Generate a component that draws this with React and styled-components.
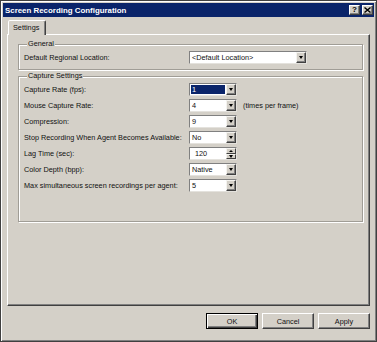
import React from "react";
import styled, { createGlobalStyle } from "styled-components";

const Global = createGlobalStyle`
  html, body { margin: 0; padding: 0; background: #d4d0c8; }
  body { font-family: "Liberation Sans", Arial, sans-serif; font-size: 7.3px; color: #111; }
  * { box-sizing: border-box; }
`;

const Window = styled.div`
  width: 377px;
  height: 342px;
  background: #d4d0c8;
  border: 1px solid #404040;
  box-shadow: inset 1px 1px 0 #ffffff, inset -1px -1px 0 #808080;
  padding: 2px;
  display: flex;
  flex-direction: column;
`;

const TitleBar = styled.div`
  height: 14px;
  background: #0a246a;
  display: flex;
  align-items: center;
  padding: 0 1px 0 2px;
`;

const TitleText = styled.div`
  flex: 1;
  color: #fff;
  font-weight: bold;
  font-size: 7.9px;
  white-space: nowrap;
`;

const TitleButtons = styled.div`
  display: flex;
  gap: 2px;
`;

const CaptionButton = styled.div`
  width: 11px;
  height: 10px;
  background: #d4d0c8;
  border: 1px solid;
  border-color: #ffffff #404040 #404040 #ffffff;
  box-shadow: inset -1px -1px 0 #808080;
  display: flex;
  align-items: center;
  justify-content: center;
  font-weight: bold;
  font-size: 8px;
  line-height: 1;
  color: #000;
`;

const Body = styled.div`
  flex: 1;
  display: flex;
  flex-direction: column;
  padding: 3px 4px 0 4px;
`;

const TabStrip = styled.div`
  display: flex;
  height: 14px;
  position: relative;
  z-index: 1;
`;

const Tab = styled.div`
  margin-left: 1px;
  width: 38px;
  height: 15px;
  background: #d4d0c8;
  border: 1px solid;
  border-bottom: none;
  border-color: #ffffff #404040 transparent #ffffff;
  box-shadow: inset -1px 0 0 #808080;
  border-radius: 2px 2px 0 0;
  padding-left: 4px;
  display: flex;
  align-items: center;
  padding-bottom: 1px;
`;

const Panel = styled.div`
  height: 272px;
  border: 1px solid;
  border-color: #ffffff #404040 #404040 #ffffff;
  box-shadow: inset -1px -1px 0 #808080;
  padding: 4px 6px 0 10px;
  display: flex;
  flex-direction: column;
`;

const Group = styled.fieldset`
  margin: ${(p) => p.$mt || 0}px 0 0 0;
  padding: 2px 5px ${(p) => p.$pb || 5}px 5px;
  border: 1px solid #a09d96;
  box-shadow: 1px 1px 0 #ffffff, inset 1px 1px 0 #ffffff;
  min-width: 0;
`;

const Legend = styled.legend`
  padding: 0 1px;
  margin-left: 3px;
  line-height: 10px;
  height: 10px;
  background: #d4d0c8;
  position: relative;
`;

const FormGrid = styled.div`
  display: grid;
  grid-template-columns: 165px auto;
  row-gap: 3px;
  align-items: center;
`;

const Label = styled.div`
  height: 13px;
  display: flex;
  align-items: center;
  white-space: nowrap;
`;

const ControlCell = styled.div`
  display: flex;
  align-items: center;
  gap: 6px;
`;

const Note = styled.span`
  white-space: nowrap;
`;

const Combo = styled.div`
  width: ${(p) => p.$w}px;
  height: 13px;
  background: #fff;
  border: 1px solid;
  border-color: #808080 #e4e2dd #e4e2dd #808080;
  display: flex;
  align-items: stretch;
`;

const ComboText = styled.div`
  flex: 1;
  display: flex;
  align-items: center;
  padding-left: ${(p) => p.$pl || 1}px;
  margin: 1px;
  background: ${(p) => (p.$selected ? "#0a246a" : "transparent")};
  color: ${(p) => (p.$selected ? "#fff" : "#111")};
  white-space: nowrap;
  overflow: hidden;
`;

const DropButton = styled.div`
  width: 10px;
  background: #d4d0c8;
  border: 1px solid;
  border-color: #f4f3ef #404040 #404040 #f4f3ef;
  box-shadow: inset -1px -1px 0 #808080;
  display: flex;
  align-items: center;
  justify-content: center;
`;

const Arrow = styled.span`
  width: 0;
  height: 0;
  border-left: 2.5px solid transparent;
  border-right: 2.5px solid transparent;
  ${(p) =>
    p.$up
      ? "border-bottom: 2px solid #000;"
      : "border-top: 3px solid #000;"}
`;

const SpinButtons = styled.div`
  width: 10px;
  display: flex;
  flex-direction: column;
`;

const SpinHalf = styled.div`
  flex: 1;
  background: #d4d0c8;
  border: 1px solid;
  border-color: #f4f3ef #404040 #404040 #f4f3ef;
  display: flex;
  align-items: center;
  justify-content: center;
`;

const Spacer = styled.div`
  flex: 1;
`;

const ButtonRow = styled.div`
  display: flex;
  justify-content: flex-end;
  gap: 4px;
  margin-top: 7px;
`;

const Button = styled.div`
  width: 52px;
  height: 16px;
  background: #d4d0c8;
  border: 1px solid;
  border-color: ${(p) => (p.$default ? "#000" : "#fff #404040 #404040 #fff")};
  box-shadow: ${(p) =>
    p.$default
      ? "inset 1px 1px 0 #fff, inset -1px -1px 0 #404040, inset -2px -2px 0 #808080"
      : "inset -1px -1px 0 #808080"};
  display: flex;
  align-items: center;
  justify-content: center;
`;

function ComboBox({ w, value, selected, pl }) {
  return (
    <Combo $w={w}>
      <ComboText $selected={selected} $pl={pl}>{value}</ComboText>
      <DropButton>
        <Arrow />
      </DropButton>
    </Combo>
  );
}

function Spin({ w, value }) {
  return (
    <Combo $w={w}>
      <ComboText $pl={4}>{value}</ComboText>
      <SpinButtons>
        <SpinHalf>
          <Arrow $up />
        </SpinHalf>
        <SpinHalf>
          <Arrow />
        </SpinHalf>
      </SpinButtons>
    </Combo>
  );
}

const rows = [
  { label: "Capture Rate (fps):", value: "1", selected: true },
  { label: "Mouse Capture Rate:", value: "4", note: "(times per frame)" },
  { label: "Compression:", value: "9" },
  { label: "Stop Recording When Agent Becomes Available:", value: "No" },
  { label: "Lag Time (sec):", value: "120", spin: true },
  { label: "Color Depth (bpp):", value: "Native" },
  { label: "Max simultaneous screen recordings per agent:", value: "5" },
];

export default function App() {
  return (
    <>
      <Global />
      <Window>
        <TitleBar>
          <TitleText>Screen Recording Configuration</TitleText>
          <TitleButtons>
            <CaptionButton>?</CaptionButton>
            <CaptionButton>
              <svg width="7" height="6" viewBox="0 0 7 6">
                <path d="M0.5 0.5 L6.5 5.5 M6.5 0.5 L0.5 5.5" stroke="#000" strokeWidth="1.4" />
              </svg>
            </CaptionButton>
          </TitleButtons>
        </TitleBar>
        <Body>
          <TabStrip>
            <Tab>Settings</Tab>
          </TabStrip>
          <Panel>
            <Group>
              <Legend>General</Legend>
              <FormGrid>
                <Label>Default Regional Location:</Label>
                <ControlCell>
                  <ComboBox w={118} value="<Default Location>" />
                </ControlCell>
              </FormGrid>
            </Group>
            <Group $mt={1} $pb={29}>
              <Legend>Capture Settings</Legend>
              <FormGrid>
                {rows.map((r) => (
                  <React.Fragment key={r.label}>
                    <Label>{r.label}</Label>
                    <ControlCell>
                      {r.spin ? (
                        <Spin w={48} value={r.value} />
                      ) : (
                        <ComboBox w={48} value={r.value} selected={r.selected} />
                      )}
                      {r.note && <Note>{r.note}</Note>}
                    </ControlCell>
                  </React.Fragment>
                ))}
              </FormGrid>
            </Group>
            <Spacer />
          </Panel>
          <ButtonRow>
            <Button $default>OK</Button>
            <Button>Cancel</Button>
            <Button>Apply</Button>
          </ButtonRow>
        </Body>
      </Window>
    </>
  );
}
